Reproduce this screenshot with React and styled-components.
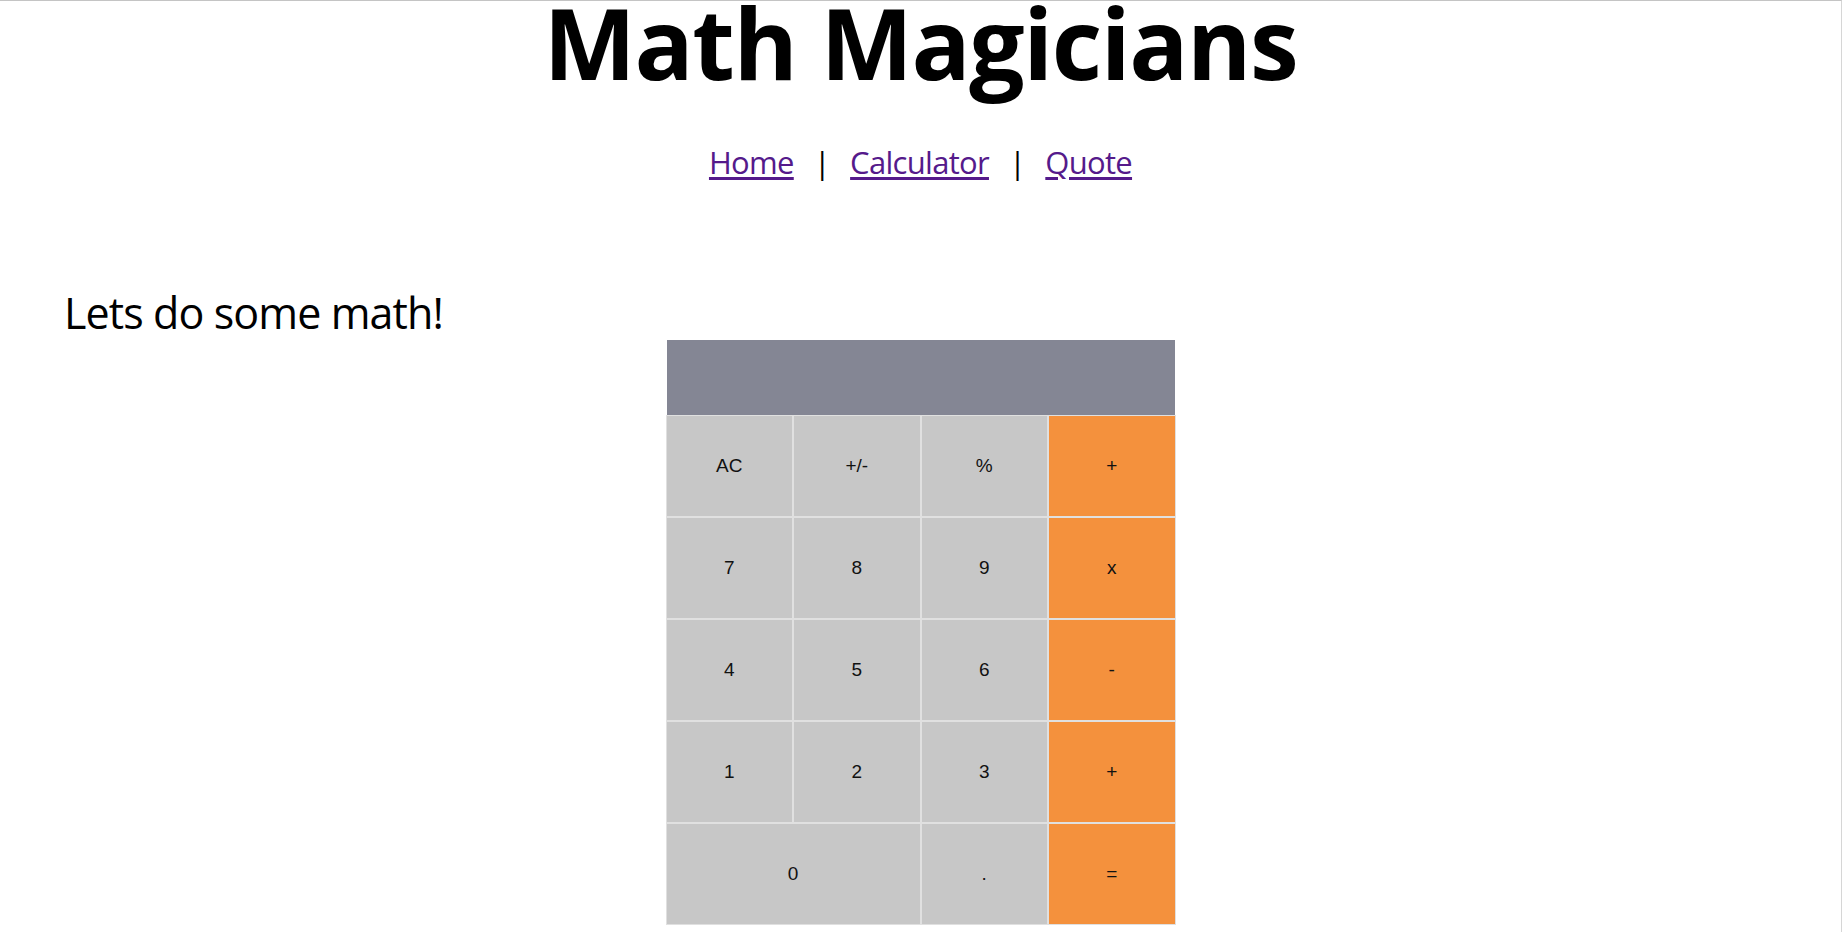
import React from "react";
import styled, { createGlobalStyle } from "styled-components";

const GlobalStyle = createGlobalStyle`
  * {
    box-sizing: border-box;
  }

  body {
    margin: 0;
    font-family: "Open Sans", "Noto Sans", sans-serif;
    background: #fff;
    color: #000;
  }
`;

const rows = [
  [{ label: "AC" }, { label: "+/-" }, { label: "%" }, { label: "+", op: true }],
  [{ label: "7" }, { label: "8" }, { label: "9" }, { label: "x", op: true }],
  [{ label: "4" }, { label: "5" }, { label: "6" }, { label: "-", op: true }],
  [{ label: "1" }, { label: "2" }, { label: "3" }, { label: "+", op: true }],
  [{ label: "0", wide: true }, { label: "." }, { label: "=", op: true }]
];

const Calculator = () => (
  <CalcWrapper>
    <Display />
    <Keypad>
      {rows.flat().map((key, i) => (
        <Key key={i} op={key.op} wide={key.wide}>
          {key.label}
        </Key>
      ))}
    </Keypad>
  </CalcWrapper>
);

const App = () => {
  return (
    <Page>
      <GlobalStyle />
      <Header>
        <Title>Math Magicians</Title>
        <Nav>
          <NavLink href="#home">Home</NavLink>
          <Pipe>|</Pipe>
          <NavLink href="#calculator">Calculator</NavLink>
          <Pipe>|</Pipe>
          <NavLink href="#quote">Quote</NavLink>
        </Nav>
      </Header>
      <Main>
        <Heading>Lets do some math!</Heading>
        <Calculator />
      </Main>
    </Page>
  );
};

export default App;

const Page = styled.div`
  min-height: 100vh;
  border-top: 1px solid #c4c4c4;
  border-right: 1px solid #d6d6d6;
  overflow: hidden;
`;

const Header = styled.header`
  display: flex;
  flex-direction: column;
  align-items: center;
`;

const Title = styled.h1`
  margin: 0;
  font-size: 98px;
  line-height: 82px;
  font-weight: 700;
  letter-spacing: -1.4px;
`;

const Nav = styled.nav`
  display: flex;
  align-items: baseline;
  margin-top: 58px;
  font-size: 31px;
  line-height: 42px;
  letter-spacing: -0.7px;
`;

const NavLink = styled.a`
  color: #551a8b;
  text-decoration: underline;
  text-underline-offset: 3px;
`;

const Pipe = styled.span`
  margin: 0 20px;
`;

const Main = styled.main`
  display: flex;
  flex-direction: column;
  margin-top: 103px;
`;

const Heading = styled.h2`
  margin: 0 0 1px 64px;
  font-size: 43px;
  line-height: 53px;
  font-weight: 400;
  letter-spacing: -0.9px;
`;

const CalcWrapper = styled.div`
  width: 510px;
  margin: 0 auto;
  display: flex;
  flex-direction: column;
  font-family: "Liberation Sans", Arial, sans-serif;
`;

const Display = styled.div`
  height: 75px;
  margin: 0 1px;
  background-color: #848694;
`;

const Keypad = styled.div`
  display: grid;
  grid-template-columns: repeat(4, 1fr);
  grid-auto-rows: 102px;
`;

const Key = styled.div`
  grid-column: ${props => (props.wide ? "span 2" : "span 1")};
  display: flex;
  justify-content: center;
  align-items: center;
  border: 1px solid #e0e0e0;
  background-color: ${props => (props.op ? "#f4913d" : "#c7c7c7")};
  font-size: 19px;
  color: #111;
`;
